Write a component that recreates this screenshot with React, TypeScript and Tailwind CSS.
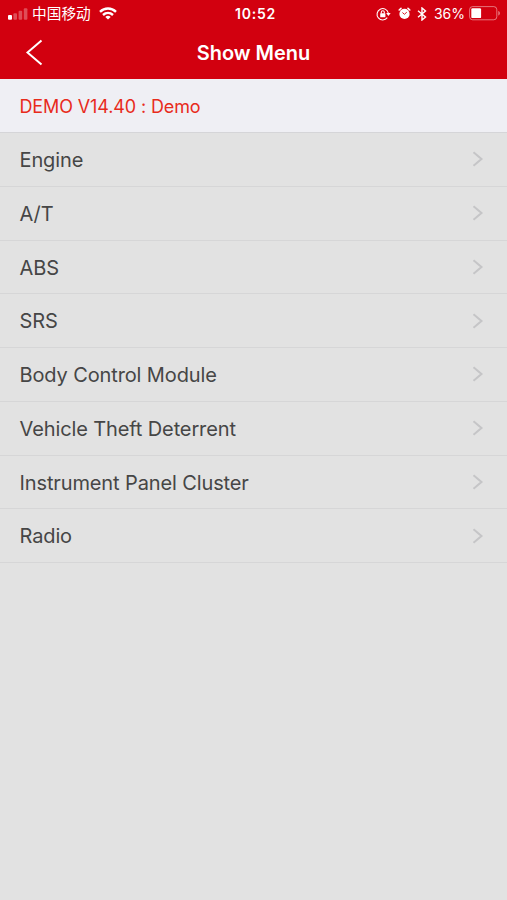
const menuItems = [
  'Engine',
  'A/T',
  'ABS',
  'SRS',
  'Body Control Module',
  'Vehicle Theft Deterrent',
  'Instrument Panel Cluster',
  'Radio',
]

function SignalIcon() {
  return (
    <svg width="20" height="13" viewBox="0 0 20 13" fill="#fff">
      <rect x="0" y="8" width="4" height="4.8" rx="1" />
      <rect x="5.4" y="6.3" width="3.6" height="6.5" rx="1" opacity="0.3" />
      <rect x="10.6" y="3.8" width="3.6" height="9" rx="1" opacity="0.3" />
      <rect x="15.8" y="1.3" width="3.6" height="11.5" rx="1" opacity="0.3" />
    </svg>
  )
}

function WifiIcon() {
  return (
    <svg width="18" height="13" viewBox="0 0 18 13" fill="none" stroke="#fff" strokeWidth="2.4">
      <path d="M1 4.8C5.6.4 12.4.4 17 4.8" />
      <path d="M4 8C7 5.2 11 5.2 14 8" />
      <path d="M9 12.6L6.3 9.9C7.9 8.5 10.1 8.5 11.7 9.9Z" fill="#fff" stroke="none" />
    </svg>
  )
}

function RotationLockIcon() {
  return (
    <svg width="15" height="14" viewBox="0 0 15 14" fill="none" stroke="#fff" strokeWidth="1.1">
      <path d="M11.3 10.7A5.7 5.7 0 1 1 12.3 6" />
      <path d="M10.1 6H14.7L12.4 8.9Z" fill="#fff" stroke="none" />
      <rect x="4.2" y="6.3" width="5.2" height="3.9" rx="0.5" fill="#fff" stroke="none" />
      <path d="M5.3 6.5V5.2a1.5 1.5 0 0 1 3 0V6.5" />
    </svg>
  )
}

function AlarmIcon() {
  return (
    <svg width="13" height="13" viewBox="0 0 13 13" fill="none">
      <circle cx="6.5" cy="6.9" r="5.1" fill="#fff" />
      <path d="M1.2 3L3 1.4M11.8 3L10 1.4" stroke="#fff" strokeWidth="1.6" strokeLinecap="round" />
      <path d="M4.4 5.5L6.4 7.3L8.8 5.2" stroke="#d2000f" strokeWidth="0.9" />
    </svg>
  )
}

function BluetoothIcon() {
  return (
    <svg width="10" height="14" viewBox="0 0 10 14" fill="none" stroke="#fff" strokeWidth="1.4">
      <path d="M1 3.8L8.5 10L5 13V1L8.5 4L1 10.2" />
    </svg>
  )
}

function BatteryIcon() {
  return (
    <svg width="32" height="15" viewBox="0 0 32 15" fill="none">
      <rect x="0.6" y="0.6" width="27.2" height="13.2" rx="3" stroke="#fff" strokeOpacity="0.45" />
      <rect x="2.3" y="2.3" width="9.8" height="9.8" rx="1.2" fill="#fff" />
      <path d="M29.3 5V9.5C31.4 8.8 31.4 5.7 29.3 5Z" fill="#fff" fillOpacity="0.5" />
    </svg>
  )
}

function StatusBar() {
  return (
    <div className="grid h-[27px] grid-cols-[1fr_auto_1fr] items-center pl-[8px] pr-[6px] text-white">
      <div className="flex items-center">
        <SignalIcon />
        <span className="ml-[4px] font-['Inter','Noto_Sans_CJK_SC',sans-serif] text-[14.7px] leading-[20px]">中国移动</span>
        <span className="ml-[8px]">
          <WifiIcon />
        </span>
      </div>
      <span className="ml-[2px] text-[14px] font-semibold leading-[20px] tracking-[0.8px]">10:52</span>
      <div className="flex items-center justify-end">
        <RotationLockIcon />
        <span className="ml-[7px]">
          <AlarmIcon />
        </span>
        <span className="ml-[6px]">
          <BluetoothIcon />
        </span>
        <span className="ml-[7px] text-[14px] leading-[20px]">36%</span>
        <span className="ml-[4px]">
          <BatteryIcon />
        </span>
      </div>
    </div>
  )
}

export default function App() {
  return (
    <div className="h-[900px] w-[507px] overflow-hidden bg-[#e2e2e2] font-['Inter',sans-serif]">
      <header className="h-[79px] bg-[#d2000f]">
        <StatusBar />
        <div className="grid h-[50px] grid-cols-[1fr_auto_1fr] items-center text-white">
          <button className="ml-[25px] w-[18px]" aria-label="Back">
            <svg width="18" height="27" viewBox="0 0 18 27" fill="none" stroke="#fff" strokeWidth="2">
              <path d="M16.5 1.5L2.5 13.5L16.5 25.5" />
            </svg>
          </button>
          <h1 className="pt-[1px] text-[20px] font-semibold leading-[28px]">Show Menu</h1>
        </div>
      </header>

      <div className="flex h-[53px] items-center bg-[#efeff4] pl-[19.5px] pt-[2px]">
        <p className="text-[18px] leading-[24px] tracking-[-0.12px] text-[#e82b1c]">DEMO V14.40 : Demo</p>
      </div>

      <ul className="border-t border-[#d5d5d8]">
        {menuItems.map((item) => (
          <li
            key={item}
            className="flex h-[53.75px] items-center justify-between border-b border-[#d6d6d7] pl-[19.5px] pr-[23px]"
          >
            <span className="pt-[1.5px] text-[20px] leading-[28px] tracking-[-0.12px] text-[#464646]">{item}</span>
            <svg width="12" height="16" viewBox="0 0 12 16" fill="none" stroke="#c5c5c7" strokeWidth="2">
              <path d="M1.5 1.2L9.5 8L1.5 14.8" />
            </svg>
          </li>
        ))}
      </ul>
    </div>
  )
}
